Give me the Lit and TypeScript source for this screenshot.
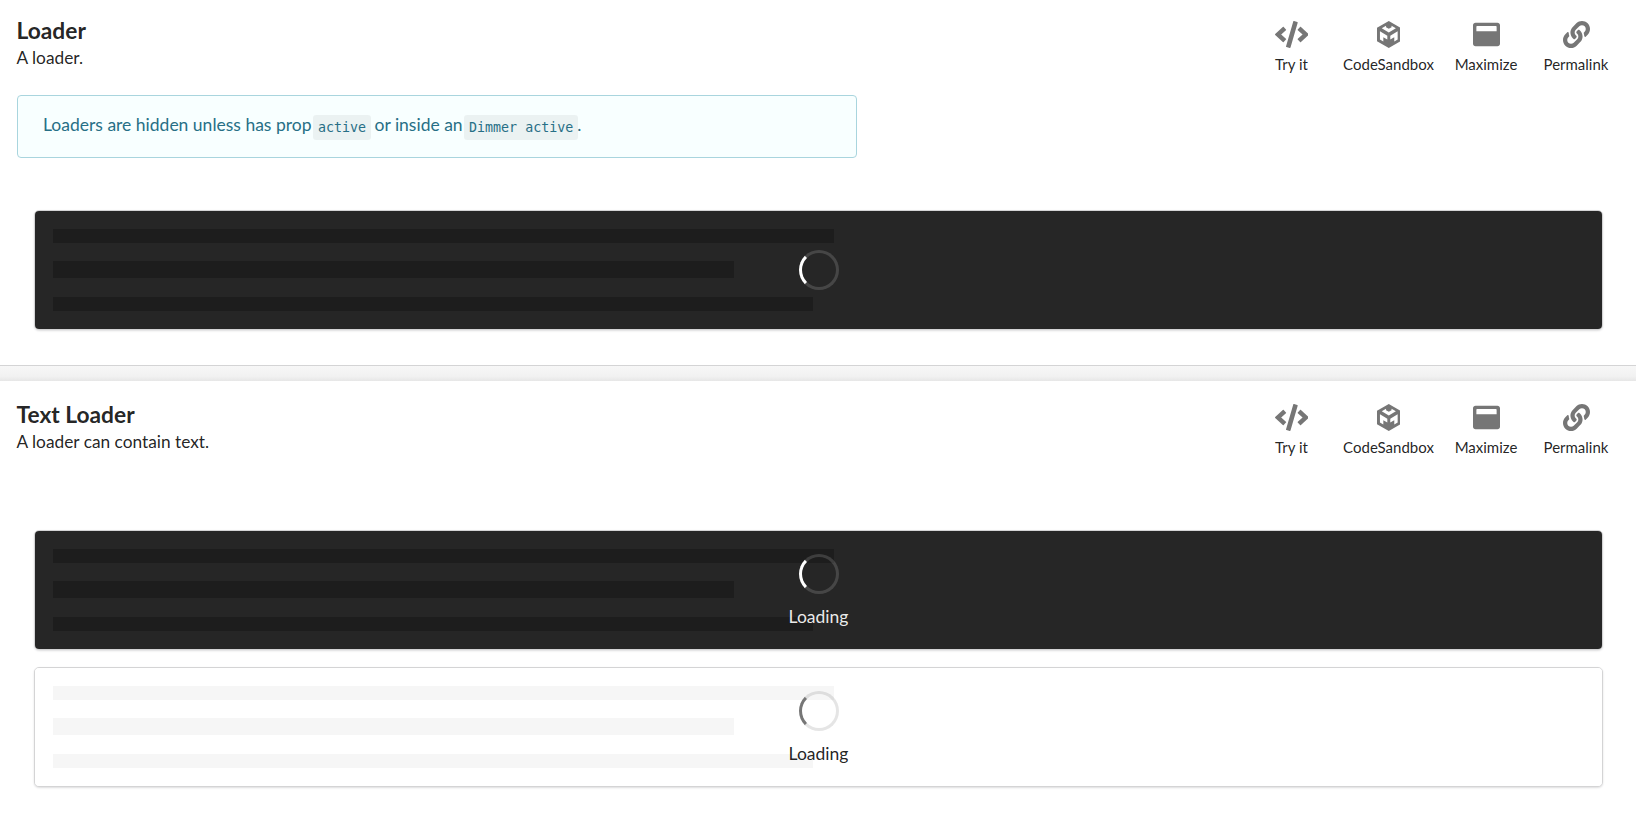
import { LitElement, html, css, svg } from "lit";
import { customElement } from "lit/decorators.js";

const codeI = svg`<path d="M278.9 511.5l-61-17.7c-6.4-1.8-10-8.5-8.2-14.9L346.2 8.7c1.8-6.4 8.5-10 14.9-8.2l61 17.7c6.4 1.8 10 8.5 8.2 14.9L293.8 503.3c-1.9 6.4-8.5 10.1-14.9 8.2zm-114-112.2l43.5-46.4c4.6-4.9 4.3-12.7-.8-17.2L117 256l90.6-79.7c5.1-4.5 5.5-12.3.8-17.2l-43.5-46.4c-4.5-4.8-12.1-5.1-17-.5L3.8 247.2c-5.1 4.7-5.1 12.8 0 17.5l144.1 135.1c4.9 4.6 12.5 4.4 17-.5zm327.2.6l144.1-135.1c5.1-4.7 5.1-12.8 0-17.5L492.1 112.1c-4.8-4.5-12.4-4.3-17 .5L431.6 159c-4.6 4.9-4.3 12.7.8 17.2L523 256l-90.6 79.7c-5.1 4.5-5.5 12.3-.8 17.2l43.5 46.4c4.5 4.9 12.1 5.1 17 .6z"/>`;
const cubeI = svg`<path fill-rule="evenodd" d="M224 0L448 128V384L224 512L0 384V128ZM90 138L224 216L358 138L276 92V118L224 148L172 118V92ZM56 196V352L120 389V306L196 350V280ZM392 196L252 280V350L328 306V389L392 352Z"/>`;
const maxI = svg`<path d="M464 32H48C21.5 32 0 53.5 0 80v352c0 26.5 21.5 48 48 48h416c26.5 0 48-21.5 48-48V80c0-26.5-21.5-48-48-48zm-16 160H64v-84c0-6.6 5.4-12 12-12h360c6.6 0 12 5.4 12 12v84z"/>`;
const linkI = svg`<path d="M326.612 185.391c59.747 59.809 58.927 155.698.36 214.59-.11.12-.24.25-.36.37l-67.2 67.2c-59.27 59.27-155.699 59.262-214.96 0-59.27-59.26-59.27-155.7 0-214.96l37.106-37.106c9.84-9.84 26.786-3.3 27.294 10.606.648 17.722 3.826 35.527 9.69 52.721 1.986 5.822.567 12.262-3.783 16.612l-13.087 13.087c-28.026 28.026-28.905 73.66-1.155 101.96 28.024 28.579 74.086 28.749 102.325.51l67.2-67.19c28.191-28.191 28.073-73.757 0-101.83-3.701-3.694-7.429-6.564-10.341-8.569a16.037 16.037 0 0 1-6.947-12.606c-.396-10.567 3.348-21.456 11.698-29.806l21.054-21.055c5.521-5.521 14.182-6.199 20.584-1.731a152.482 152.482 0 0 1 20.522 17.197zM467.547 44.449c-59.261-59.262-155.69-59.27-214.96 0l-67.2 67.2c-.12.12-.25.25-.36.37-58.566 58.892-59.387 154.781.36 214.59a152.454 152.454 0 0 0 20.521 17.196c6.402 4.468 15.064 3.789 20.584-1.731l21.054-21.055c8.35-8.35 12.094-19.239 11.698-29.806a16.037 16.037 0 0 0-6.947-12.606c-2.912-2.005-6.64-4.875-10.341-8.569-28.073-28.073-28.191-73.639 0-101.83l67.2-67.19c28.239-28.239 74.3-28.069 102.325.51 27.75 28.3 26.872 73.934-1.155 101.96l-13.087 13.087c-4.35 4.35-5.769 10.79-3.783 16.612 5.864 17.194 9.042 34.999 9.69 52.721.509 13.906 17.454 20.446 27.294 10.606l37.106-37.106c59.271-59.259 59.271-155.699.001-214.959z"/>`;

const actions = [
  { label: "Try it", vb: "0 0 640 512", w: 33.75, h: 27, item: 91, icon: codeI },
  { label: "CodeSandbox", vb: "0 0 448 512", w: 23.6, h: 27, item: 103, icon: cubeI },
  { label: "Maximize", vb: "0 0 512 512", w: 27, h: 27, item: 92, icon: maxI },
  { label: "Permalink", vb: "0 0 512 512", w: 27, h: 27, item: 88, icon: linkI },
];

@customElement("app-root")
export class AppRoot extends LitElement {
  static styles = css`
    :host { display: block; font-family: Lato, "Liberation Sans", sans-serif; font-size: 17.5px; color: rgba(0,0,0,.87); background: #fff; height: 818px; overflow: hidden; }
    .section { background: #fff; padding-top: 14px; }
    .first { height: 351px; border-bottom: 1px solid #d4d4d5; }
    .second { padding-top: 16px; }
    .second h2 { margin-top: 4px; }
    .band { height: 15px; background: linear-gradient(#f7f7f7, #f1f1f1 70%, #e6e6e6); }
    .head { display: flex; justify-content: space-between; padding: 0 16px 0 16.5px; height: 64px; }
    h2 { margin: 3px 0 0; font-size: 22.75px; line-height: 28px; font-weight: 700; color: rgba(0,0,0,.87); }
    .desc { font-size: 17.3px; line-height: 26px; }
    .acts { display: flex; }
    .act { display: flex; flex-direction: column; align-items: center; padding-top: 7px; font-size: 15px; line-height: 22px; color: rgba(0,0,0,.87); }
    .act svg { display: block; fill: #767676; margin-bottom: 5px; }
    .info { margin: 17px 0 0 17px; width: 840px; height: 63px; box-sizing: border-box; border: 1px solid #a9d5de; border-radius: 4px; background: #f8ffff; color: #276f86; padding: 0 25px 4px; display: flex; align-items: center; white-space: pre; line-height: 24px; }
    code { font-family: "DejaVu Sans Mono", monospace; font-size: 13.3px; background: rgba(0,0,0,.05); border-radius: 3px; padding: 3px 5px; line-height: 19px; color: #276f86; margin: 6px -1px 0 -3px; }
    .seg { position: relative; margin: 0 33px 0 34px; height: 120px; box-sizing: border-box; border: 1px solid #d4d4d5; border-radius: 5px; padding: 18px 17px 17px 17.5px; box-shadow: 0 1px 2px 0 rgba(34,36,38,.15); background: #fff; overflow: hidden; }
    .after-info { margin-top: 52px; }
    .after-head { margin-top: 69px; }
    .spaced { margin-top: 17px; }
    .para { height: 81.5px; display: flex; flex-direction: column; justify-content: space-between; }
    .bar { background: #c4c4c4; }
    .b1 { width: 781px; height: 14px; }
    .b2 { width: 681.5px; height: 17px; }
    .b3 { width: 760px; height: 14px; }
    .dim { position: absolute; inset: 0; display: flex; flex-direction: column; align-items: center; justify-content: center; }
    .text { padding-top: 2px; }
    .dark .dim { background: rgba(0,0,0,.85); color: rgba(255,255,255,.92); }
    .light .dim { background: rgba(255,255,255,.85); color: rgba(0,0,0,.87); }
    .spin { width: 40px; height: 40px; box-sizing: border-box; border-radius: 50%; border: 3px solid rgba(255,255,255,.15); border-left-color: #fff; }
    .light .spin { border-color: rgba(0,0,0,.1); border-left-color: #767676; }
    .lbl { margin-top: 10px; line-height: 25px; font-size: 17.5px; }
  `;

  head(t: string, d: string) {
    return html`<div class="head">
      <div><h2>${t}</h2><div class="desc">${d}</div></div>
      <div class="acts">${actions.map(a => html`<div class="act" style="width:${a.item}px"><svg viewBox=${a.vb} style="width:${a.w}px;height:${a.h}px">${a.icon}</svg><span>${a.label}</span></div>`)}</div>
    </div>`;
  }

  para() {
    return html`<div class="para"><div class="bar b1"></div><div class="bar b2"></div><div class="bar b3"></div></div>`;
  }

  render() {
    return html`
      <div class="section first">
        ${this.head("Loader", "A loader.")}
        <div class="info"><span>Loaders are hidden unless has prop </span><code>active</code><span> or inside an </span><code>Dimmer active</code><span>.</span></div>
        <div class="seg dark after-info">${this.para()}<div class="dim"><div class="spin"></div></div></div>
      </div>
      <div class="band"></div>
      <div class="section second">
        ${this.head("Text Loader", "A loader can contain text.")}
        <div class="seg dark after-head">${this.para()}<div class="dim text"><div class="spin"></div><div class="lbl">Loading</div></div></div>
        <div class="seg light spaced">${this.para()}<div class="dim text"><div class="spin"></div><div class="lbl">Loading</div></div></div>
      </div>
    `;
  }
}
